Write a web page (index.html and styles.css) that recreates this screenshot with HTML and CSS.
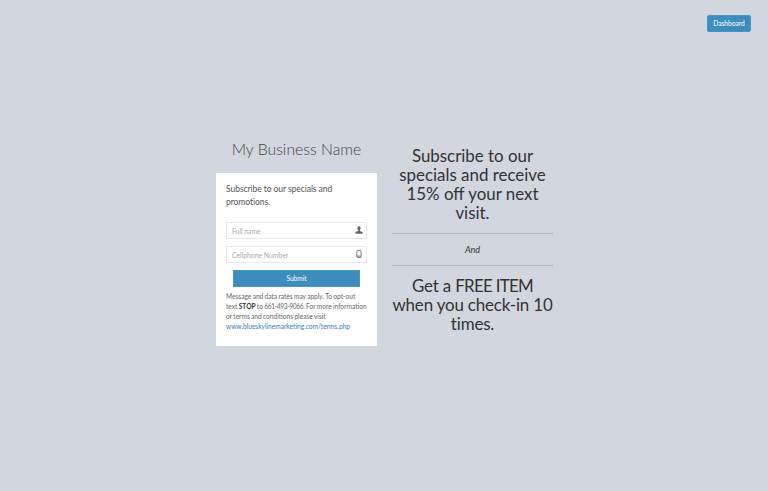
FILE: index.html
```html
<!DOCTYPE html>
<html lang="en">
<head>
<meta charset="utf-8">
<title>My Business Name</title>
<link rel="stylesheet" href="styles.css">
</head>
<body>
<header class="topbar"><a class="dash-btn" href="#">Dashboard</a></header>
<main class="layout">
  <section class="signup">
    <h1 class="brand">My Business Name</h1>
    <div class="card">
      <p class="lead">Subscribe to our specials and promotions.</p>
      <form class="form">
        <div class="field">
          <input class="input" type="text" placeholder="Full name">
          <svg class="icon" viewBox="0 0 12 12"><path fill="#666" d="M6 .3c1.500 0 2.400 1.100 2.400 2.800 0 1.300-.5 2.500-1.200 3.100v1.400l3 1c.7.3 1.200.7 1.200 1.400v1.700H.6V10c0-.7.5-1.100 1.200-1.400l3-1V6.200c-.7-.6-1.200-1.800-1.200-3.100C3.600 1.400 4.500.3 6 .3z"/></svg>
        </div>
        <div class="field">
          <input class="input" type="text" placeholder="Cellphone Number">
          <svg class="icon" viewBox="0 0 12 12"><path fill="none" stroke="#666" stroke-width="1.300" d="M3.800.8h4.400c.6 0 1 .4 1 1v8.400c0 .6-.4 1-1 1H3.800c-.6 0-1-.4-1-1V1.800c0-.6.4-1 1-1z"/><path fill="#666" d="M2.800 8.600h6.400v1.200H2.800z"/></svg>
        </div>
        <button class="submit" type="button">Submit</button>
      </form>
      <p class="terms">Message and data rates may apply. To opt-out<br>text <b>STOP</b> to <span class="phone">661-493-9066</span>. For more information<br>or terms and conditions please visit<br><a href="#">www.blueskylinemarketing.com/terms.php</a></p>
    </div>
  </section>
  <section class="offer">
    <h2 class="offer-title">Subscribe to our specials and receive 15% off your next visit.</h2>
    <hr class="rule">
    <p class="and">And</p>
    <hr class="rule">
    <h2 class="offer-title offer-title--wide">Get a <span class="caps">FREE ITEM</span><br>when you check-in 10<br>times.</h2>
  </section>
</main>
</body>
</html>
```
FILE: styles.css
```css
* { box-sizing: border-box; }
html, body { margin: 0; height: 100%; }
body {
  background: #d2d6de;
  font-family: Lato, "Open Sans", sans-serif;
  color: #333;
  font-size: 9px;
  overflow: hidden;
}
.topbar { display: flex; justify-content: flex-end; padding: 15px 17px 0 0; height: 133px; }
.dash-btn {
  display: block; height: 17px; width: 44px;
  background: #3c8dbc; border: 1px solid #4a96c2; border-radius: 2px;
  color: #fff; font-size: 6.600px; line-height: 15px; text-align: center; text-decoration: none;
}
.layout { display: flex; align-items: flex-start; padding-left: 216px; }
.signup { width: 161px; }
.brand { margin: 0; height: 40px; font-size: 15.800px; font-weight: 300; line-height: 32px; text-align: center; color: #444; }
.card { background: #fff; padding: 10px 10px 15px; height: 173px; color: #666; }
.lead { margin: 0 0 13px; font-size: 8.600px; letter-spacing: -.1px; line-height: 13px; color: #555; }
.form { display: flex; flex-direction: column; }
.field { position: relative; margin-bottom: 7px; height: 17px; }
.input { display: block; width: 100%; height: 17px; border: 1px solid #e6e8ec; padding: 0 18px 0 5px; font: 6.800px Lato, sans-serif; color: #555; background: #fff; border-radius: 0; outline: none; }
.input::placeholder { color: #aaa; opacity: 1; }
.icon { position: absolute; right: 4px; top: 4px; width: 8px; height: 8px; }
.submit { align-self: center; width: 127px; height: 17px; background: #3c8dbc; border: 1px solid #4a96c2; color: #fff; font: 6.600px Lato, sans-serif; padding: 0 0 2px; }
.terms { margin: 4px -6px 0 0; font-size: 6.600px; line-height: 10px; color: #666; word-spacing: -.4px; white-space: nowrap; }
.terms b { color: #333; }
.terms a { color: #3c78b4; text-decoration: none; word-spacing: 0; }
.phone { letter-spacing: -.35px; }
.offer { width: 161px; margin-left: 15px; padding-top: 13px; text-align: center; }
.offer-title { margin: 0; font-size: 16.900px; font-weight: 400; line-height: 19px; color: #333; }
.offer-title--wide { margin: 0 -4px; letter-spacing: -.15px; }
.caps { letter-spacing: -.7px; }
.rule { margin: 11px 0 10px; border: 0; border-top: 1px solid #9fb8cc; }
.and { margin: 0; padding-top: 1px; font-size: 9px; line-height: 9px; font-style: italic; color: #333; }
```
